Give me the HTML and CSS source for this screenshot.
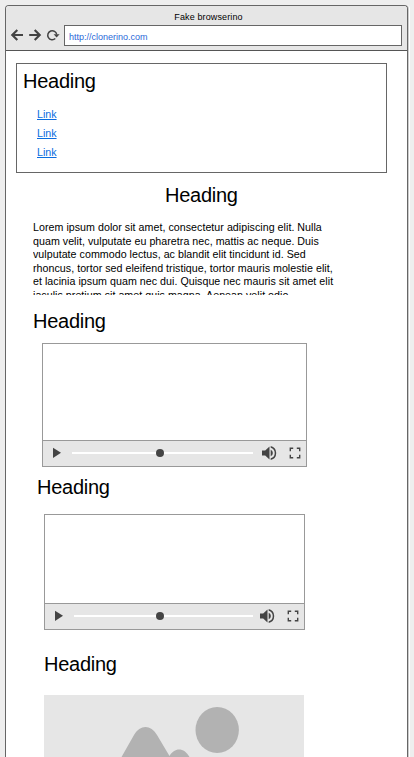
FILE: index.html
```html
<!DOCTYPE html>
<html lang="en">
<head>
<meta charset="utf-8">
<title>Fake browserino</title>
<link rel="stylesheet" href="styles.css">
</head>
<body>
<svg class="defs" aria-hidden="true">
  <symbol id="play" viewBox="0 0 10 12"><path d="M1 .7v10.2l8-5.1z"/></symbol>
  <symbol id="volume" viewBox="0 0 16 16"><path d="M1 5.500v5h3.200l4.300 4V1.500L4.200 5.500zM9.700 4.700v6.600a3.600 3.600 0 0 0 0-6.600zM9.700 1v1.700a5.500 5.500 0 0 1 0 10.600V15a7.200 7.200 0 0 0 0-14z"/></symbol>
  <symbol id="fullscreen" viewBox="0 0 12 12"><path d="M1.300 4.200V1.300H4.200M7.800 1.300h2.900V4.200M10.700 7.800v2.900H7.800M4.200 10.700H1.300V7.800" fill="none" stroke="#444" stroke-width="1.400"/></symbol>
</svg>
<div class="window">
  <header class="chrome">
    <div class="title">Fake browserino</div>
    <div class="toolbar">
      <svg class="nav" viewBox="0 0 50 14">
        <path d="M7.300 2 2.300 7l5 5M2.500 7H13M24.700 2 29.700 7l-5 5M29.500 7H19.200" fill="none" stroke="#444" stroke-width="2.200"/>
        <path d="M45.300 10.500A4.500 4.500 0 1 1 46.700 6.500" fill="none" stroke="#444" stroke-width="1.500"/>
        <path d="M43.600 6.300h6L46.600 9.600z" fill="#444"/>
      </svg>
      <div class="address">http://clonerino.com</div>
    </div>
  </header>
  <main class="page">
    <nav class="menu">
      <h2>Heading</h2>
      <ul>
        <li><a href="#">Link</a></li>
        <li><a href="#">Link</a></li>
        <li><a href="#">Link</a></li>
      </ul>
    </nav>
    <h2 class="h-center">Heading</h2>
    <p class="copy">Lorem ipsum dolor sit amet, consectetur adipiscing elit. Nulla<br>quam velit, vulputate eu pharetra nec, mattis ac neque. Duis<br>vulputate commodo lectus, ac blandit elit tincidunt id. Sed<br>rhoncus, tortor sed eleifend tristique, tortor mauris molestie elit,<br>et lacinia ipsum quam nec dui. Quisque nec mauris sit amet elit<br>iaculis pretium sit amet quis magna. Aenean velit odio</p>
    <h2 class="h-first">Heading</h2>
    <section class="video first">
      <div class="screen"></div>
      <div class="controls">
        <svg class="play"><use href="#play"/></svg>
        <div class="track"><i class="knob"></i></div>
        <svg class="volume"><use href="#volume"/></svg>
        <svg class="full"><use href="#fullscreen"/></svg>
      </div>
    </section>
    <h2 class="h-second">Heading</h2>
    <section class="video second">
      <div class="screen"></div>
      <div class="controls">
        <svg class="play"><use href="#play"/></svg>
        <div class="track"><i class="knob"></i></div>
        <svg class="volume"><use href="#volume"/></svg>
        <svg class="full"><use href="#fullscreen"/></svg>
      </div>
    </section>
    <h2 class="h-third">Heading</h2>
    <svg class="picture" viewBox="0 0 260 62">
      <path fill="#e6e6e6" d="M0 0h260v62H0z"/>
      <ellipse cx="173.200" cy="35" rx="21.700" ry="23" fill="#b2b2b2"/>
      <path fill="#b2b2b2" d="M77.500 62 90 40C96 29.300 107 29.300 113 40L125.500 61C130 52.500 140 51.500 145.500 62z"/>
    </svg>
  </main>
</div>
</body>
</html>
```
FILE: styles.css
```css
* { box-sizing: border-box; }

body {
  margin: 0;
  height: 757px;
  padding: 5px 5px 0;
  overflow: hidden;
  background: #eee;
  color: #000;
  font-family: "Liberation Sans", Arial, sans-serif;
}

.defs { display: none; }
svg { display: block; flex: none; fill: #444; }

.window {
  width: 403px;
  height: 752px;
  border: 1px solid #666;
  border-bottom: 0;
  border-radius: 4px 4px 0 0;
  background: #fff;
  box-shadow: 1px 0 0 #ccc, 2px 0 0 #fff;
  overflow: hidden;
}

.chrome {
  height: 45px;
  border-bottom: 1px solid #555;
  background: #e6e6e6;
}

.title {
  height: 19px;
  padding-top: 5px;
  padding-left: 4px;
  font-size: 9px;
  line-height: 12px;
  letter-spacing: .13px;
  text-align: center;
}

.toolbar { display: flex; }
.nav { width: 50px; height: 14px; margin: 3px 4px 0 4px; }

.address {
  width: 338px;
  height: 21px;
  padding: 6px 4px;
  border: 1px solid #666;
  background: #fff;
  color: #2a68d8;
  font-size: 9px;
  line-height: 11px;
}

h2 {
  margin: 0;
  font-size: 20px;
  line-height: 24px;
  font-weight: 400;
  letter-spacing: -.27px;
}

.page { padding: 12px 0 0 10px; }

.menu {
  width: 371px;
  height: 110px;
  padding: 5px 6px;
  border: 1px solid #666;
}

.menu ul { margin: 12px 0 0 14px; padding: 0; list-style: none; }
.menu li { height: 19px; font-size: 10.670px; line-height: 19px; }
.menu a { color: #0a6ce0; }

.h-center { margin: 10px 0 0 149px; }

.copy {
  height: 74px;
  margin: 14px 0 0 17px;
  overflow: hidden;
  white-space: nowrap;
  font-size: 10.670px;
  line-height: 13.500px;
  letter-spacing: .035px;
}

.h-first { margin: 14px 0 0 17px; }
.h-second { margin: 8px 0 0 21px; }
.h-third { margin: 22px 0 0 28px; }

.video { border: 1px solid #999; }
.first { width: 265px; height: 124px; margin: 10px 0 0 26px; }
.second { width: 261px; height: 116px; margin: 15px 0 0 28px; }
.first .screen { height: 96px; }
.second .screen { height: 88px; }

.controls {
  display: flex;
  align-items: center;
  height: 26px;
  padding: 0 0 1px 9px;
  border-top: 1px solid #999;
  background: #e6e6e6;
}

.play { width: 10px; height: 12px; }
.track { display: flex; width: 181px; height: 2px; margin-left: 10px; background: #fff; }
.second .track { width: 179px; }
.knob {
  width: 8px;
  height: 8px;
  margin: -3px 0 0 83.500px;
  border-radius: 50%;
  background: #444;
}
.second .knob { margin-left: 81.500px; }
.volume { width: 16px; height: 16px; margin-left: 8px; }
.second .volume { margin-left: 6px; }
.full { width: 12px; height: 12px; margin-left: 12px; }

.picture { width: 260px; height: 62px; margin: 19px 0 0 28px; }
```
